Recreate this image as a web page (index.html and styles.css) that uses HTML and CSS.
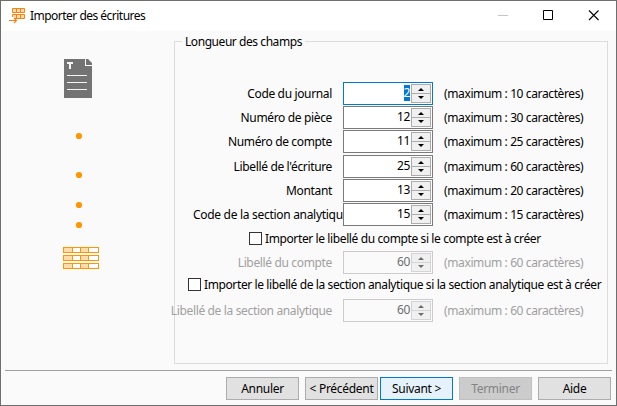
FILE: index.html
```html
<!DOCTYPE html>
<html lang="fr">
<head>
<meta charset="utf-8">
<title>Importer des écritures</title>
<link rel="stylesheet" href="styles.css">
</head>
<body>
<div class="window">
  <header class="titlebar">
    <svg class="app-icon" width="17" height="16" viewBox="0 0 17 16">
      <path d="M3.5.5h12v4h-12zM3.5 6.5h12v4h-12z" fill="#ffd9b0" stroke="#f9820f"/>
      <path d="M7.500.5v4M11.500.5v4M7.500 6.500v4M11.500 6.500v4" stroke="#f9820f"/>
      <path d="M0 9h5v2h4v5H0z" fill="#fff"/>
      <path d="M0 12.500h7.500M5 10l2.500 2.500L5 15" fill="none" stroke="#f9820f" stroke-width="1.100"/>
    </svg>
    <h1 class="title">Importer des écritures</h1>
    <svg class="controls" width="102" height="12" viewBox="0 0 102 12" fill="none">
      <path d="M0 5.500h10" stroke="#c4c4c4"/>
      <path d="M45.500.5h9v9h-9z" stroke="#000"/>
      <path d="M91 .5l9.500 9.500M100.500.5L91 10" stroke="#000" stroke-width="1.100"/>
    </svg>
  </header>
  <main class="content">
    <aside class="steps">
      <svg width="40" height="214" viewBox="0 0 40 214">
        <path d="M2 0h28v39H2z" fill="#fff"/>
        <path d="M26 0h4v4z" fill="#fafafa"/>
        <path d="M2 0h21v7h7v32H2z" fill="#737373"/>
        <path d="M24 0h2l4 4v2h-6z" fill="#737373"/>
        <path d="M5 3h6v2H9v5H7V5H5zM5 16h20v1H5zM5 23h20v1H5zM5 30h20v1H5z" fill="#f4f4f4"/>
        <g fill="#ff9500"><circle cx="17" cy="77" r="3.1"/><circle cx="17" cy="116" r="3.1"/><circle cx="17" cy="146" r="3.1"/><circle cx="17" cy="166" r="3.1"/></g>
        <g shape-rendering="crispEdges">
          <path d="M1.500 188.500h35v5h-35zM1.500 196.500h35v5h-35zM1.500 204.500h35v5h-35z" fill="#fff"/>
          <path d="M2 189h8v4H2zM19 189h7v4h-7zM2 197h8v4H2zM19 197h7v4h-7zM2 205h8v4H2zM19 205h7v4h-7z" fill="#ffdcaa"/>
          <path d="M1.500 188.500h35v5h-35zM1.500 196.500h35v5h-35zM1.500 204.500h35v5h-35zM10.500 188v6M18.500 188v6M26.500 188v6M10.500 196v6M18.500 196v6M26.500 196v6M10.500 204v6M18.500 204v6M26.500 204v6" fill="none" stroke="#ff9500"/>
        </g>
      </svg>
    </aside>
    <section class="group">
      <h2 class="legend">Longueur des champs</h2>
      <div class="rows">
        <div class="row"><span class="label">Code du journal</span><div class="field focus"><span class="value"><span class="sel">2</span></span><span class="spin"><i class="up"></i><i class="down"></i></span></div><span class="hint">(maximum : 10 caractères)</span></div>
        <div class="row"><span class="label">Numéro de pièce</span><div class="field"><span class="value">12</span><span class="spin"><i class="up"></i><i class="down"></i></span></div><span class="hint">(maximum : 30 caractères)</span></div>
        <div class="row tall"><span class="label">Numéro de compte</span><div class="field"><span class="value">11</span><span class="spin"><i class="up"></i><i class="down"></i></span></div><span class="hint">(maximum : 25 caractères)</span></div>
        <div class="row"><span class="label">Libellé de l'écriture</span><div class="field"><span class="value">25</span><span class="spin"><i class="up"></i><i class="down"></i></span></div><span class="hint">(maximum : 60 caractères)</span></div>
        <div class="row"><span class="label">Montant</span><div class="field"><span class="value">13</span><span class="spin"><i class="up"></i><i class="down"></i></span></div><span class="hint">(maximum : 20 caractères)</span></div>
        <div class="row"><span class="label long">Code de la section analytiqu</span><div class="field"><span class="value">15</span><span class="spin"><i class="up"></i><i class="down"></i></span></div><span class="hint">(maximum : 15 caractères)</span></div>
        <div class="check first"><i class="box"></i><span>Importer le libellé du compte si le compte est à créer</span></div>
        <div class="row disabled"><span class="label">Libellé du compte</span><div class="field"><span class="value">60</span><span class="spin"><i class="up"></i><i class="down"></i></span></div><span class="hint">(maximum : 60 caractères)</span></div>
        <div class="check second"><i class="box"></i><span>Importer le libellé de la section analytique si la section analytique est à créer</span></div>
        <div class="row disabled"><span class="label wide">Libellé de la section analytique</span><div class="field"><span class="value">60</span><span class="spin"><i class="up"></i><i class="down"></i></span></div><span class="hint">(maximum : 60 caractères)</span></div>
      </div>
    </section>
  </main>
  <footer class="footer">
    <div class="btn">Annuler</div>
    <div class="btn prev">&lt; Précédent</div>
    <div class="btn primary">Suivant &gt;</div>
    <div class="btn off">Terminer</div>
    <div class="btn">Aide</div>
  </footer>
</div>
</body>
</html>
```
FILE: styles.css
```css
* { box-sizing: border-box; }
body {
  margin: 0;
  font-family: "Noto Sans", "Open Sans", sans-serif;
  font-size: 12px;
  line-height: 16px;
  letter-spacing: -0.35px;
  color: #000;
  white-space: nowrap;
}
.window {
  width: 617px;
  height: 406px;
  border: 1px solid #6e6e6e;
  background: #fafafa;
  display: flex;
  flex-direction: column;
  overflow: hidden;
}
.titlebar {
  height: 30px;
  background: #fff;
  display: flex;
  align-items: flex-start;
  padding: 7px 15px 0 8px;
}
.title { margin: 0 auto 0 4px; font: inherit; letter-spacing: -0.52px; }
.controls { margin-top: 2px; margin-right: 1px; }
.content { display: flex; height: 339px; }
.steps { width: 173px; padding: 28px 0 0 61px; }
.steps svg { display: block; }
.group {
  width: 434px;
  height: 323px;
  margin-top: 10px;
  border: 1px solid #dcdcdc;
}
.legend {
  width: 123px;
  height: 16px;
  margin: -8px 0 0 7px;
  padding-left: 3px;
  background: #fafafa;
  font: inherit;
  letter-spacing: -0.44px;
}
.rows { margin-top: 32px; }
.row { display: flex; height: 24px; }
.tall { height: 25px; }
.label {
  width: 157px;
  height: 20px;
  padding-top: 4px;
  margin-right: 11px;
  display: flex;
  justify-content: flex-end;
}
.long { width: 168px; margin-right: 0; padding-left: 18px; justify-content: flex-start; overflow: hidden; letter-spacing: -0.3px; }
.wide { width: 161px; margin-left: -4px; }
.field {
  width: 90px;
  height: 23px;
  flex: none;
  border: 1px solid #7a7a7a;
  background: #fff;
  display: flex;
  justify-content: flex-end;
  padding: 1px;
}
.focus { border-color: #0078d7; }
.value { padding-top: 1px; margin-right: 1px; letter-spacing: -0.4px; }
.sel { background: #0078d7; color: #fff; display: block; height: 16px; }
.spin {
  width: 20px;
  height: 19px;
  border: 1px solid #acacac;
  background: linear-gradient(#acacac, #acacac) 0 8px / 100% 1px no-repeat, #f0f0f0;
  display: flex;
  flex-direction: column;
  align-items: center;
  padding: 3px 0;
  justify-content: space-between;
}
.up, .down { width: 6px; height: 3px; background: #000; }
.up { clip-path: polygon(50% 0, 100% 100%, 0 100%); }
.down { clip-path: polygon(0 0, 100% 0, 50% 100%); }
.hint { padding: 4px 0 0 11px; letter-spacing: -0.38px; }
.disabled { color: #a0a0a0; }
.disabled .field { border-color: #ccc; background: #fafafa; }
.disabled .value { color: #6d6d6d; }
.disabled .spin { border-color: #d4d4d4; background: linear-gradient(#d4d4d4, #d4d4d4) 0 8px / 100% 1px no-repeat, #f0f0f0; }
.disabled .up, .disabled .down { background: #6d6d6d; }
.check { display: flex; height: 24px; align-items: flex-start; letter-spacing: -0.39px; }
.box { width: 13px; height: 13px; flex: none; border: 1px solid #333; background: #fff; }
.check span { margin: -1px 0 0 3px; }
.first { padding: 5px 0 0 74px; }
.second { padding: 3px 0 0 13px; }
.footer {
  height: 35px;
  margin: 0 4px;
  border-top: 1px solid #a0a0a0;
  padding: 6px 1px 0 0;
  display: flex;
  justify-content: flex-end;
  gap: 6px;
}
.btn {
  width: 73px;
  height: 23px;
  border: 1px solid #adadad;
  background: #e1e1e1;
  text-align: center;
  line-height: 21px;
  letter-spacing: -0.3px;
}
.prev { margin-right: -4px; }
.primary { border-color: #0078d7; background: #e5f1fb; }
.off { border-color: #bfbfbf; background: #ccc; color: #838383; }
```
